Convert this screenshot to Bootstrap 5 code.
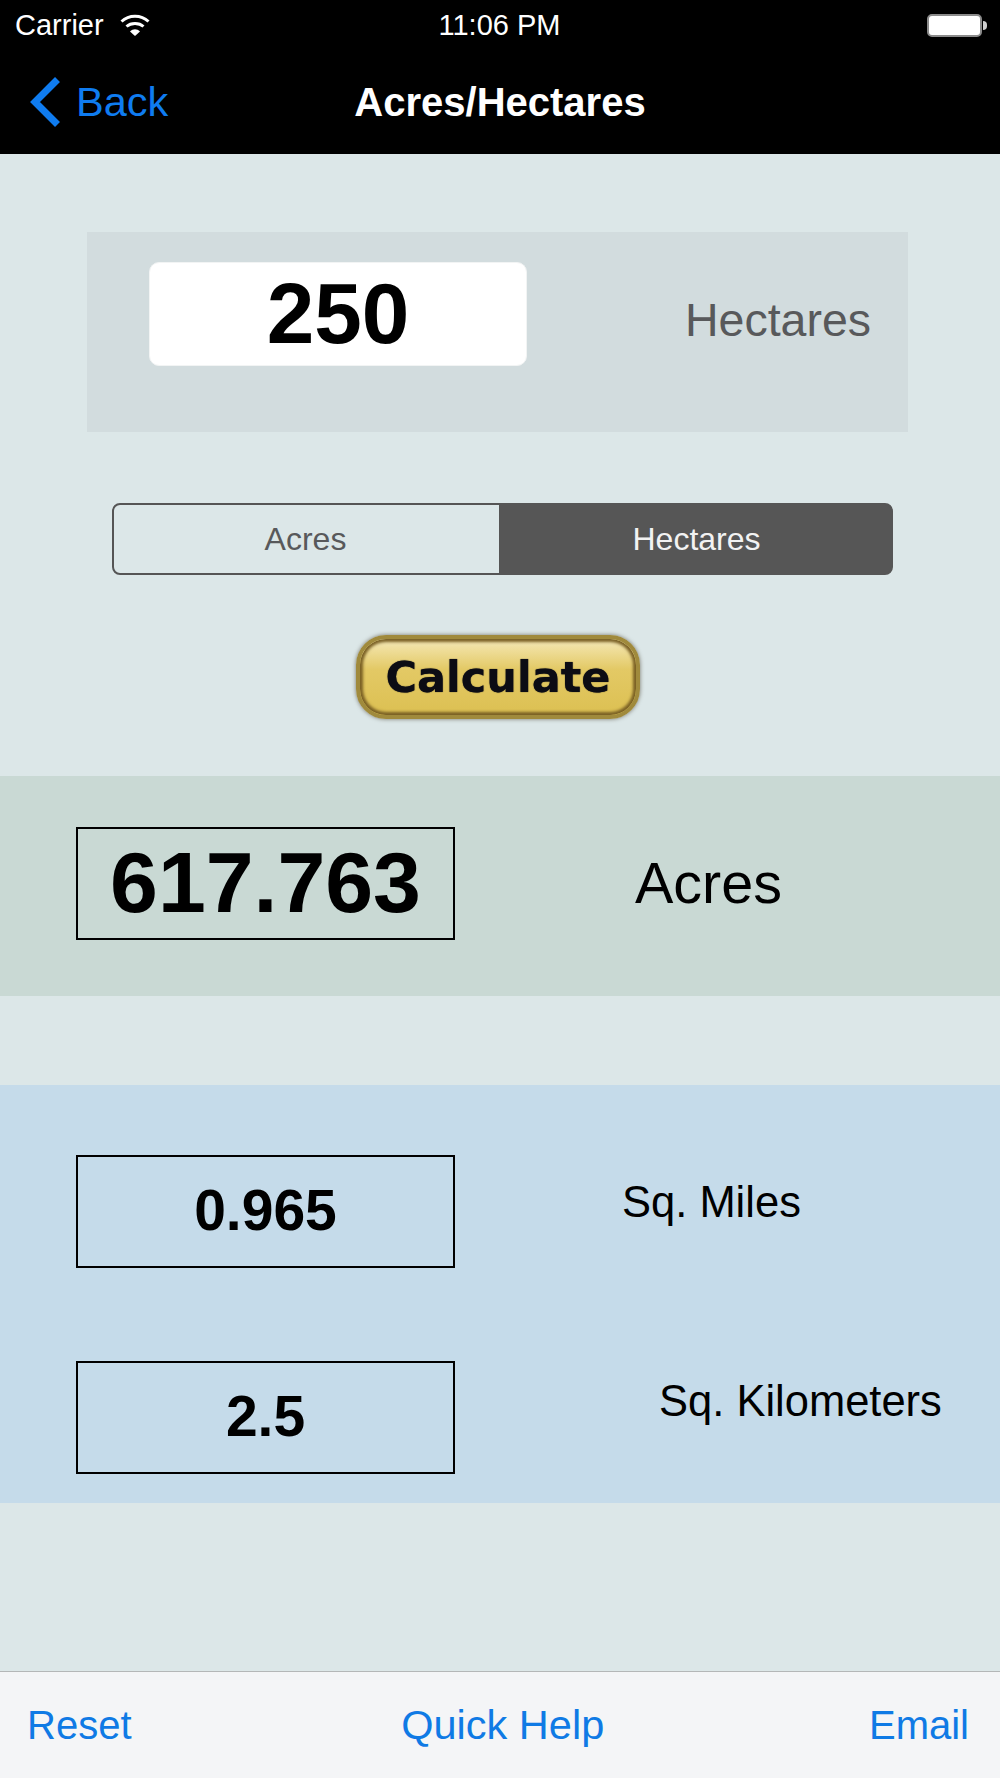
<!DOCTYPE html>
<html lang="en">
  <head>
    <meta charset="UTF-8" />
    <meta name="viewport" content="width=device-width, initial-scale=1.0" />
    <title>Acres/Hectares</title>
    <link href="https://cdn.jsdelivr.net/npm/bootstrap@5.3.0/dist/css/bootstrap.min.css" rel="stylesheet" />
    <style>
      body {
        height: 1778px;
        background-color: #dce7e8;
        font-family: "Liberation Sans", Arial, sans-serif;
        color: #000;
      }
      .top-bar { height: 154px; background: #000; color: #fff; }
      .status-row {
        display: grid;
        grid-template-columns: 1fr auto 1fr;
        align-items: center;
        height: 50px;
        padding: 0 13px 0 15px;
        font-size: 29px;
        line-height: 1;
      }
      .status-time { font-size: 29px; margin-left: -3px; }
      .title-row {
        display: grid;
        grid-template-columns: 1fr auto 1fr;
        align-items: center;
        height: 104px;
        padding: 0 30px;
      }
      .back-link { color: #0f7cf0; font-size: 41.5px; line-height: 1; gap: 16px; text-decoration: none; }
      .page-title { font-size: 40px; font-weight: 700; line-height: 1; margin: 0; }
      .battery-shape {
        width: 55px; height: 23px;
        background: #fff;
        border: 2px solid #8b8b8b;
        border-radius: 5px;
      }
      .battery-nub { width: 4px; height: 9px; background: #cfcfcf; border-radius: 0 4px 4px 0; margin-left: 1px; }

      .input-panel {
        height: 200px;
        margin: 78px 92px 0 87px;
        padding: 30px 0 0 62px;
        background: #d2dcde;
      }
      .value-field {
        width: 378px; height: 104px;
        padding-bottom: 1px;
        background: #fff;
        border: 1px solid #f2f4f4;
        border-radius: 10px;
        font-size: 85.5px;
        font-weight: 700;
        line-height: 1;
      }
      .panel-label { margin: 35px 0 0 158px; font-size: 46.5px; line-height: 1; color: #58595b; }

      .unit-switch { width: 780px; height: 72px; margin: 71px 0 0 112px; }
      .unit-switch .btn {
        font-size: 32px;
        line-height: 1;
        border: 2px solid #555;
        border-radius: 8px;
        color: #58595b;
        background: transparent;
        flex: none;
        width: 389px;
        padding-right: 14px;
      }
      .unit-switch .btn.active { width: 393px; padding-right: 12px; background: #565656; color: #f2f2f2; border-color: #565656; }

      .calc-wrap { margin-top: 60px; height: 84px; padding-right: 4px; }
      .calc-btn {
        width: 284px; height: 84px;
        padding: 0;
        border: 4px solid #a08a3c;
        border-radius: 30px;
        background: linear-gradient(#f3e8b8 0, #eedc96 16%, #e3c965 40%, #dcc052 100%);
        box-shadow: inset 0 0 3px 3px #7a6024, 0 0 4px #77756a;
        font-family: "DejaVu Sans", Verdana, sans-serif;
        font-size: 43px;
        font-weight: 700;
        line-height: 1;
        color: #0c0c14;
        text-shadow: 0 0 1px #0c0c14;
        filter: blur(.7px);
      }

      .result-band { height: 220px; margin-top: 57px; padding: 51px 0 0 76px; background: #c9d9d4; }
      .other-band { height: 418px; margin-top: 89px; padding: 70px 0 0 76px; background: #c5dbea; }
      .other-row + .other-row { margin-top: 93px; }
      .out-box {
        width: 379px; height: 113px;
        flex: none;
        padding-bottom: 3px;
        border: 2px solid #000;
        font-weight: 700;
        line-height: 1;
      }
      .out-big { font-size: 86px; }
      .out-small { font-size: 57px; }
      .out-label { line-height: 1; }
      .label-acres { margin: 28px 0 0 180px; font-size: 57.500px; }
      .label-miles { margin: 26px 0 0 167px; font-size: 43.500px; }
      .label-km { margin: 19px 0 0 204px; font-size: 43.500px; }

      .bottom-bar {
        height: 107px;
        padding: 0 31px 0 27px;
        background: #f4f5f7;
        border-top: 1px solid #b4b7b8;
        font-size: 40px;
        line-height: 1;
      }
      .bottom-bar a { color: #0f7ae5; text-decoration: none; }
      .bottom-bar .help-link { font-size: 41.5px; margin-left: 5px; }
    </style>
  </head>
  <body class="d-flex flex-column">
    <!-- Status + nav -->
    <header class="top-bar">
      <div class="status-row">
        <div class="d-flex align-items-center gap-3">
          <span>Carrier</span>
          <svg width="30" height="22" viewBox="0 0 30 22" fill="none" stroke="#fff" stroke-width="3">
            <path d="M1.500 7.500C9 .5 21 .5 28.500 7.500" />
            <path d="M6.500 12.500C11 8.500 19 8.500 23.500 12.500" />
            <path d="M10 17.500l5 4.500 5-4.500C17 14.500 13 14.500 10 17.500z" fill="#fff" stroke="none" />
          </svg>
        </div>
        <span class="status-time">11:06 PM</span>
        <div class="d-flex align-items-center justify-content-end">
          <div class="battery-shape"></div>
          <div class="battery-nub"></div>
        </div>
      </div>
      <nav class="title-row">
        <a href="#" class="back-link d-flex align-items-center">
          <svg width="30" height="50" viewBox="0 0 30 50" fill="none" stroke="#0f7cf0" stroke-width="7">
            <path d="M27.500 2.500L5 25l22.500 22.500" />
          </svg>
          <span>Back</span>
        </a>
        <h1 class="page-title">Acres/Hectares</h1>
        <span></span>
      </nav>
    </header>

    <!-- Input -->
    <section class="input-panel d-flex align-items-start">
      <div class="value-field d-flex align-items-center justify-content-center">250</div>
      <div class="panel-label">Hectares</div>
    </section>

    <div class="btn-group unit-switch" role="group">
      <button type="button" class="btn">Acres</button>
      <button type="button" class="btn active">Hectares</button>
    </div>

    <div class="calc-wrap d-flex justify-content-center">
      <button type="button" class="btn calc-btn">Calculate</button>
    </div>

    <!-- Results -->
    <section class="result-band d-flex align-items-start">
      <div class="out-box out-big d-flex align-items-center justify-content-center">617.763</div>
      <div class="out-label label-acres">Acres</div>
    </section>

    <section class="other-band">
      <div class="other-row d-flex align-items-start">
        <div class="out-box out-small d-flex align-items-center justify-content-center">0.965</div>
        <div class="out-label label-miles">Sq. Miles</div>
      </div>
      <div class="other-row d-flex align-items-start">
        <div class="out-box out-small d-flex align-items-center justify-content-center">2.5</div>
        <div class="out-label label-km">Sq. Kilometers</div>
      </div>
    </section>

    <!-- Toolbar -->
    <footer class="bottom-bar mt-auto d-flex align-items-center justify-content-between">
      <a href="#">Reset</a>
      <a href="#" class="help-link">Quick Help</a>
      <a href="#">Email</a>
    </footer>

    <script src="https://cdn.jsdelivr.net/npm/bootstrap@5.3.0/dist/js/bootstrap.bundle.min.js"></script>
  </body>
</html>
